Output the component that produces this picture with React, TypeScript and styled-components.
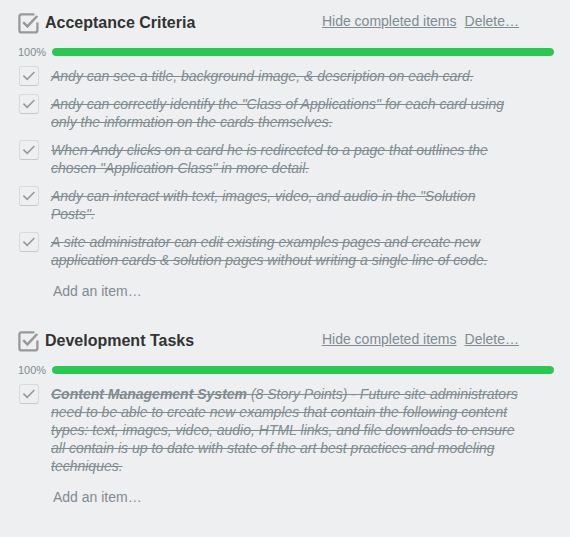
import React, { useState } from "react";
import styled, { createGlobalStyle } from "styled-components";

const GlobalStyle = createGlobalStyle`
  *, *::before, *::after { box-sizing: border-box; }
  body {
    margin: 0;
    background: #edeff0;
    color: #7f8c90;
    font: 14px/18px "Liberation Sans", Arial, Helvetica, sans-serif;
  }
`;

const Page = styled.main`
  display: flex;
  flex-direction: column;
  gap: 26px;
  padding: 8px 16px 8px 18px;
`;

const Checklist = styled.section`
  display: flex;
  flex-direction: column;
`;

const Header = styled.header`
  display: flex;
  align-items: center;
  gap: 6px;
  height: 30px;
  padding-right: 35px;
`;

const HeaderIcon = styled.svg`
  flex: none;
  width: 21px;
  height: 21px;
`;

const Title = styled.h2`
  flex: 1;
  margin: 0;
  color: #333;
  font-size: 16px;
  line-height: 20px;
`;

const Actions = styled.nav`
  display: flex;
  gap: 8px;
  padding-bottom: 4px;
`;

const ActionLink = styled.a`
  color: inherit;
  text-decoration: underline;
  white-space: nowrap;
`;

const ProgressRow = styled.div`
  display: grid;
  grid-template-columns: 34px 1fr;
  align-items: center;
  height: 12px;
  margin-top: 8px;
`;

const Percent = styled.span`
  font-size: 11px;
  line-height: 12px;
`;

const Track = styled.div`
  height: 8px;
  overflow: hidden;
  border-radius: 4px;
  background: #d6dadc;
`;

const Fill = styled.div`
  height: 100%;
  border-radius: 4px;
  background: #28c94f;
`;

const Items = styled.ul`
  display: flex;
  flex-direction: column;
  gap: 10px;
  margin: 0;
  padding: 9px 33px 0 1px;
  list-style: none;
`;

const ItemLabel = styled.label`
  display: grid;
  grid-template-columns: 20px 1fr;
  align-items: start;
  column-gap: 12px;
  cursor: pointer;
`;

const Box = styled.span`
  position: relative;
  height: 18px;
`;

const Checkbox = styled.input`
  appearance: none;
  display: block;
  width: 20px;
  height: 20px;
  margin: -1px 0 0;
  border: 1px solid #d6dadc;
  border-bottom-color: #c4c9cc;
  border-radius: 3px;
`;

const Tick = styled.svg`
  position: absolute;
  top: -1px;
  left: 0;
  width: 20px;
  height: 20px;
  pointer-events: none;
`;

const ItemText = styled.span<{ $done: boolean }>`
  font-style: ${(p) => (p.$done ? "italic" : "normal")};
  text-decoration: ${(p) => (p.$done ? "line-through" : "none")};
`;

const AddButton = styled.button`
  align-self: flex-start;
  margin: 13px 0 0 35px;
  padding: 0;
  border: 0;
  background: none;
  color: inherit;
  font: inherit;
  cursor: pointer;
`;

interface Task {
  lead?: string;
  text: string;
}

const criteria: Task[] = [
  { text: "Andy can see a title, background image, & description on each card." },
  { text: 'Andy can correctly identify the "Class of Applications" for each card using only the information on the cards themselves.' },
  { text: 'When Andy clicks on a card he is redirected to a page that outlines the chosen "Application Class" in more detail.' },
  { text: 'Andy can interact with text, images, video, and audio in the "Solution Posts".' },
  { text: "A site administrator can edit existing examples pages and create new application cards & solution pages without writing a single line of code." },
];

const development: Task[] = [
  {
    lead: "Content Management System",
    text: " (8 Story Points) - Future site administrators need to be able to create new examples that contain the following content types: text, images, video, audio, HTML links, and file downloads to ensure all contain is up to date with state of the art best practices and modeling techniques.",
  },
];

function ChecklistPanel({ title, tasks }: { title: string; tasks: Task[] }) {
  const [done, setDone] = useState<boolean[]>(() => tasks.map(() => true));
  const percent = Math.round((done.filter(Boolean).length / tasks.length) * 100);
  const toggle = (index: number) =>
    setDone((prev) => prev.map((value, i) => (i === index ? !value : value)));

  return (
    <Checklist>
      <Header>
        <HeaderIcon viewBox="0 0 21 21" fill="none" stroke="#999" aria-hidden="true">
          <path d="M16.4 1.3H3.6Q1.4 1.3 1.4 3.5V17.2Q1.4 19.4 3.6 19.4H17.2Q19.4 19.4 19.4 17.2V9.6" strokeWidth="2.3" />
          <path d="M5.2 9.2L9.4 13.4L19.2 3" strokeWidth="2.5" />
        </HeaderIcon>
        <Title>{title}</Title>
        <Actions aria-label={title}>
          <ActionLink href="#hide">Hide completed items</ActionLink>
          <ActionLink href="#delete">Delete…</ActionLink>
        </Actions>
      </Header>
      <ProgressRow>
        <Percent>{percent}%</Percent>
        <Track role="progressbar" aria-label={title} aria-valuenow={percent} aria-valuemin={0} aria-valuemax={100}>
          <Fill style={{ width: `${percent}%` }} />
        </Track>
      </ProgressRow>
      <Items>
        {tasks.map((task, index) => (
          <li key={task.text}>
            <ItemLabel>
              <Box>
                <Checkbox type="checkbox" checked={done[index]} onChange={() => toggle(index)} />
                {done[index] && (
                  <Tick viewBox="0 0 20 20" fill="none" stroke="#999" strokeWidth="1.6" aria-hidden="true">
                    <path d="M4.4 9.6L8.2 13.4L15.4 6" />
                  </Tick>
                )}
              </Box>
              <ItemText $done={done[index]}>
                {task.lead && <strong>{task.lead}</strong>}
                {task.text}
              </ItemText>
            </ItemLabel>
          </li>
        ))}
      </Items>
      <AddButton type="button">Add an item…</AddButton>
    </Checklist>
  );
}

export default function App() {
  return (
    <>
      <GlobalStyle />
      <Page>
        <ChecklistPanel title="Acceptance Criteria" tasks={criteria} />
        <ChecklistPanel title="Development Tasks" tasks={development} />
      </Page>
    </>
  );
}
